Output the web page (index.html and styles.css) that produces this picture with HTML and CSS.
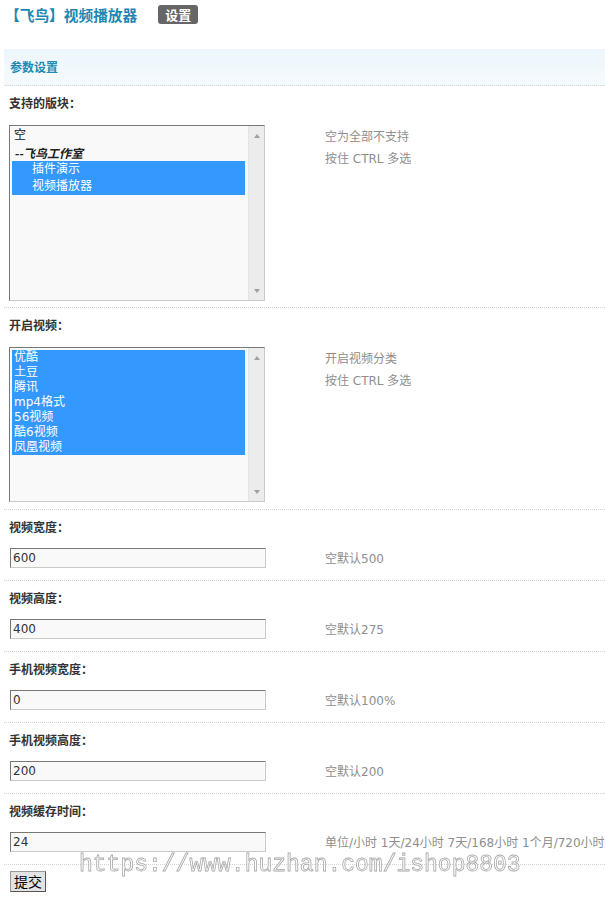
FILE: index.html
```html
<!DOCTYPE html>
<html>
<head>
<meta charset="utf-8">
<title>视频播放器</title>
<link rel="stylesheet" href="styles.css">
</head>
<body>
<div class="page">
  <div class="title">
    <span class="title-name">【飞鸟】视频播放器</span>
    <span class="badge">设置</span>
  </div>

  <div class="section">
    <div class="section-head">参数设置</div>

    <div class="row row-list1">
      <div class="label">支持的版块：</div>
      <div class="field">
        <div class="control">
          <div class="listbox list1">
            <div class="options">
              <div class="opt">空</div>
              <div class="opt group">--飞鸟工作室</div>
              <div class="opt sub sel">插件演示</div>
              <div class="opt sub sel">视频播放器</div>
            </div>
            <div class="scroll"><span class="arrow up"></span><span class="arrow down"></span></div>
          </div>
        </div>
        <div class="hint">空为全部不支持<br>按住 CTRL 多选</div>
      </div>
    </div>

    <div class="row row-list2">
      <div class="label">开启视频：</div>
      <div class="field">
        <div class="control">
          <div class="listbox list2">
            <div class="options">
              <div class="opt sel">优酷</div>
              <div class="opt sel">土豆</div>
              <div class="opt sel">腾讯</div>
              <div class="opt sel">mp4格式</div>
              <div class="opt sel">56视频</div>
              <div class="opt sel">酷6视频</div>
              <div class="opt sel">凤凰视频</div>
            </div>
            <div class="scroll"><span class="arrow up"></span><span class="arrow down"></span></div>
          </div>
        </div>
        <div class="hint">开启视频分类<br>按住 CTRL 多选</div>
      </div>
    </div>

    <div class="row">
      <div class="label">视频宽度：</div>
      <div class="field inline">
        <div class="control"><input class="input" type="text" value="600"></div>
        <div class="hint">空默认500</div>
      </div>
    </div>

    <div class="row">
      <div class="label">视频高度：</div>
      <div class="field inline">
        <div class="control"><input class="input" type="text" value="400"></div>
        <div class="hint">空默认275</div>
      </div>
    </div>

    <div class="row">
      <div class="label">手机视频宽度：</div>
      <div class="field inline">
        <div class="control"><input class="input" type="text" value="0"></div>
        <div class="hint">空默认100%</div>
      </div>
    </div>

    <div class="row">
      <div class="label">手机视频高度：</div>
      <div class="field inline">
        <div class="control"><input class="input" type="text" value="200"></div>
        <div class="hint">空默认200</div>
      </div>
    </div>

    <div class="row">
      <div class="label">视频缓存时间：</div>
      <div class="field inline">
        <div class="control"><input class="input" type="text" value="24"></div>
        <div class="hint">单位/小时 1天/24小时 7天/168小时 1个月/720小时</div>
      </div>
    </div>
  </div>

  <div class="submit-row"><button class="btn" type="button">提交</button></div>

  <div class="watermark">https://www.huzhan.com/ishop8803</div>
</div>
</body>
</html>
```

FILE: styles.css
```css
html, body {
  margin: 0;
  padding: 0;
  background: #fff;
}

body {
  font-family: "DejaVu Sans", "Noto Sans CJK SC", sans-serif;
  font-size: 12px;
  color: #333;
  overflow-x: hidden;
}

.page {
  position: relative;
  min-height: 906px;
}

.title {
  display: flex;
  align-items: center;
  padding: 5px 0 0 5px;
  height: 19px;
}

.title-name {
  font-family: "Noto Sans CJK SC", sans-serif;
  font-size: 14.7px;
  font-weight: bold;
  color: #1b87b3;
  line-height: 19px;
}

.badge {
  margin-left: 21px;
  background: #666;
  color: #fff;
  font-family: "Noto Sans CJK SC", sans-serif;
  font-weight: bold;
  font-size: 13px;
  line-height: 19px;
  padding: 0 7px;
  border-radius: 3px;
}

.section {
  margin: 25px 0 0 4px;
}

.section-head {
  height: 36px;
  line-height: 36px;
  background: linear-gradient(#edf6fc, #f5fafd);
  border-bottom: 1px dotted #cfd6da;
  padding-left: 6px;
  font-family: "Noto Sans CJK SC", sans-serif;
  font-weight: bold;
  font-size: 12px;
  color: #2389b0;
}

.row {
  padding: 8px 0 12px 5px;
  border-bottom: 1px dotted #d4d4d4;
}

.row-list1 {
  padding-bottom: 6px;
}

.row-list2 {
  padding-bottom: 7px;
}

.label {
  font-family: "Noto Sans CJK SC", sans-serif;
  font-weight: bold;
  line-height: 18px;
  height: 18px;
  color: #333;
}

.field {
  display: flex;
  margin-top: 13px;
}

.field.inline {
  margin-top: 12px;
  align-items: flex-start;
  height: 20px;
}

.control {
  width: 316px;
  flex: none;
}

.hint {
  color: #8e8e8e;
  line-height: 22px;
  padding-top: 1px;
  white-space: nowrap;
}

.inline .hint {
  line-height: 22px;
  height: 20px;
  padding-top: 0;
}

.listbox {
  box-sizing: border-box;
  width: 256px;
  height: 176px;
  border: 1px solid;
  border-color: #777 #c9c9c9 #c9c9c9 #777;
  background: #f9f9f9;
  display: flex;
}

.list2 {
  height: 155px;
}

.options {
  flex: 1;
  padding: 1px 3px 0 2px;
  overflow: hidden;
}

.list2 .options {
  padding-top: 2px;
}

.opt {
  line-height: 17px;
  height: 17px;
  padding-left: 2px;
  white-space: nowrap;
  color: #111;
}

.list2 .opt {
  line-height: 15px;
  height: 15px;
}

.opt.group {
  font-family: "Noto Sans CJK SC", sans-serif;
  font-style: italic;
  font-weight: bold;
  color: #222;
}

.opt.sub {
  padding-left: 20px;
}

.opt.sel {
  background: #3399ff;
  color: #fff;
}

.scroll {
  width: 16px;
  flex: none;
  background: #ececec;
  border-left: 1px solid #e4e4e4;
  box-sizing: border-box;
  display: flex;
  flex-direction: column;
  justify-content: space-between;
  align-items: center;
  padding: 8px 0 7px;
}

.arrow {
  width: 0;
  height: 0;
  border-left: 3px solid transparent;
  border-right: 3px solid transparent;
}

.arrow.up {
  border-bottom: 4px solid #a0a0a0;
}

.arrow.down {
  border-top: 4px solid #a0a0a0;
}

.input {
  box-sizing: border-box;
  display: block;
  width: 256px;
  height: 20px;
  margin: 0 0 0 1px;
  border: 1px solid;
  border-color: #777 #c9c9c9 #c9c9c9 #777;
  background: #f9f9f9;
  padding: 0 2px;
  font-family: "DejaVu Sans", sans-serif;
  font-size: 12px;
  color: #333;
  outline: none;
}

.submit-row {
  padding: 6px 0 0 10px;
}

.btn {
  box-sizing: border-box;
  width: 36px;
  height: 21px;
  padding: 0;
  margin: 0;
  background: #e3e3e3;
  border: 1px solid;
  border-color: #9a9a9a #555 #555 #9a9a9a;
  font-family: "Noto Sans CJK SC", sans-serif;
  font-size: 14px;
  line-height: 19px;
  color: #000;
}

.watermark {
  position: absolute;
  top: 852px;
  left: 79px;
  font-family: "Liberation Mono", monospace;
  font-size: 23px;
  line-height: 26px;
  white-space: nowrap;
  color: rgba(255, 255, 255, 0.75);
  -webkit-text-stroke: 0.8px #aaaaaa;
  -webkit-font-smoothing: antialiased;
  will-change: transform;
  pointer-events: none;
}
```
